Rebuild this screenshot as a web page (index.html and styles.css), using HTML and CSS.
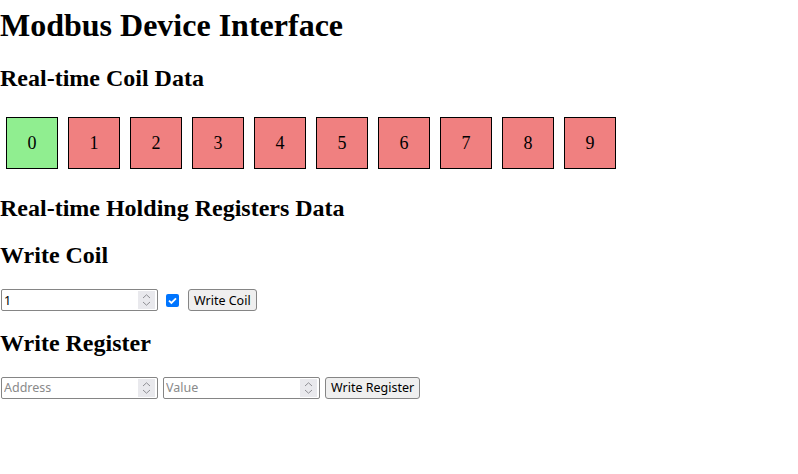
FILE: index.html
```html
<!DOCTYPE html>
<html>
<head>
<meta charset="utf-8">
<title>Modbus Device Interface</title>
<link rel="stylesheet" href="styles.css">
</head>
<body>
<h1 class="title">Modbus Device Interface</h1>
<h2>Real-time Coil Data</h2>
<div class="coils">
  <div class="coil on">0</div>
  <div class="coil off">1</div>
  <div class="coil off">2</div>
  <div class="coil off">3</div>
  <div class="coil off">4</div>
  <div class="coil off">5</div>
  <div class="coil off">6</div>
  <div class="coil off">7</div>
  <div class="coil off">8</div>
  <div class="coil off">9</div>
</div>
<h2>Real-time Holding Registers Data</h2>
<div class="registers"></div>
<h2>Write Coil</h2>
<div class="row">
  <span class="field">
    <input type="number" class="num" value="1">
    <span class="spin"><svg width="17" height="18" viewBox="0 0 17 18"><path d="M5 7 L8.5 3.8 L12 7 M5 11 L8.5 14.2 L12 11" fill="none" stroke="#8f8f94" stroke-width="1"/></svg></span>
  </span>
  <span class="chk"><svg width="13" height="13" viewBox="0 0 13 13"><path d="M3 6.6 L5.4 9 L10 4.3" fill="none" stroke="#fff" stroke-width="1.8"/></svg></span>
  <button class="btn">Write Coil</button>
</div>
<h2 class="after-row">Write Register</h2>
<div class="row">
  <span class="field">
    <input type="number" class="num" placeholder="Address">
    <span class="spin"><svg width="17" height="18" viewBox="0 0 17 18"><path d="M5 7 L8.5 3.8 L12 7 M5 11 L8.5 14.2 L12 11" fill="none" stroke="#8f8f94" stroke-width="1"/></svg></span>
  </span>
  <span class="field">
    <input type="number" class="num" placeholder="Value">
    <span class="spin"><svg width="17" height="18" viewBox="0 0 17 18"><path d="M5 7 L8.5 3.8 L12 7 M5 11 L8.5 14.2 L12 11" fill="none" stroke="#8f8f94" stroke-width="1"/></svg></span>
  </span>
  <button class="btn">Write Register</button>
</div>
</body>
</html>
```

FILE: styles.css
```css
body {
  margin: 0;
  padding-bottom: 20px;
  font-family: "Liberation Serif", "Times New Roman", serif;
  color: #000;
}
.title {
  margin-top: 7px;
}
.coils {
  display: flex;
  padding-left: 1px;
  padding-bottom: 1px;
}
.coil {
  width: 50px;
  height: 50px;
  margin: 5px;
  border: 1px solid #000;
  display: flex;
  align-items: center;
  justify-content: center;
  font-size: 18px;
}
.coil.on { background: lightgreen; }
.coil.off { background: lightcoral; }
.row {
  display: flex;
  align-items: center;
  gap: 5px;
  padding-left: 1px;
  margin-top: 2px;
}
.after-row {
  margin-top: 18.9px;
}
.field {
  position: relative;
  display: block;
  width: 157px;
  height: 22px;
}
.num {
  box-sizing: border-box;
  width: 157px;
  height: 22px;
  margin: 0;
  padding: 1px 2px;
  border: 1px solid #858585;
  border-radius: 2px;
  background: #fff;
  font-family: "Noto Sans", "Open Sans", sans-serif;
  font-size: 12.5px;
  color: #000;
  -moz-appearance: textfield;
  appearance: textfield;
}
.num::-webkit-inner-spin-button,
.num::-webkit-outer-spin-button {
  -webkit-appearance: none;
  margin: 0;
}
.num::placeholder {
  color: #8a8a8a;
}
.spin {
  position: absolute;
  right: 3px;
  top: 2px;
  width: 17px;
  height: 18px;
  background: #e9e9ed;
  display: block;
}
.spin svg { display: block; }
.chk {
  display: block;
  width: 13px;
  height: 13px;
  margin: 0 4px 0 3px;
  background: #0075ff;
  border-radius: 2px;
}
.chk svg { display: block; }
.btn {
  box-sizing: border-box;
  height: 22px;
  margin: 0;
  padding: 0 5px;
  border: 1px solid #858585;
  border-radius: 3px;
  background: #efefef;
  font-family: "Noto Sans", "Open Sans", sans-serif;
  font-size: 12.5px;
  color: #000;
}
```
